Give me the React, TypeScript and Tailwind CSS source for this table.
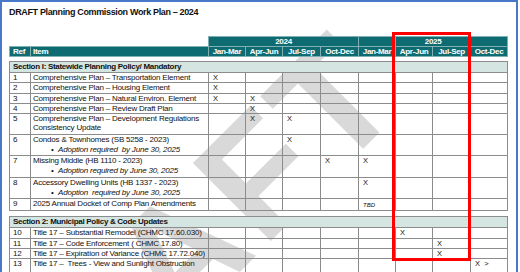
const quarters = ["Jan-Mar", "Apr-Jun", "Jul-Sep", "Oct-Dec", "Jan-Mar", "Apr-Jun", "Jul-Sep", "Oct-Dec"];

type Row = {
  ref: string;
  item: string;
  line2?: string;
  sub?: string;
  marks: Record<number, string>;
};

const section1: Row[] = [
  { ref: "1", item: "Comprehensive Plan – Transportation Element", marks: { 0: "X" } },
  { ref: "2", item: "Comprehensive Plan – Housing Element", marks: { 0: "X" } },
  { ref: "3", item: "Comprehensive Plan – Natural Environ. Element", marks: { 0: "X", 1: "X" } },
  { ref: "4", item: "Comprehensive Plan – Review Draft Plan", marks: { 1: "X" } },
  {
    ref: "5",
    item: "Comprehensive Plan – Development Regulations",
    line2: "Consistency Update",
    marks: { 1: "X", 2: "X" },
  },
  { ref: "6", item: "Condos & Townhomes (SB 5258 - 2023)", sub: "Adoption required  by June 30, 2025", marks: { 2: "X" } },
  { ref: "7", item: "Missing Middle (HB 1110 - 2023)", sub: "Adoption required by June 30, 2025", marks: { 3: "X", 4: "X" } },
  { ref: "8", item: "Accessory Dwelling Units (HB 1337 - 2023)", sub: "Adoption  required by June 30, 2025", marks: { 4: "X" } },
  { ref: "9", item: "2025 Annual Docket of Comp Plan Amendments", marks: { 4: "TBD" } },
];

const section2: Row[] = [
  { ref: "10", item: "Title 17 – Substantial Remodel (CHMC 17.60.030)", marks: { 5: "X" } },
  { ref: "11", item: "Title 17 – Code Enforcement ( CHMC 17.80)", marks: { 6: "X" } },
  { ref: "12", item: "Title 17 – Expiration of Variance (CHMC 17.72.040)", marks: { 6: "X" } },
  { ref: "13", item: "Title 17 –  Trees - View and Sunlight Obstruction", line2: "\u00a0", marks: { 7: "X  >" } },
];

function Mark({ value }: { value?: string }) {
  if (!value) return null;
  if (value === "TBD") {
    return <span className="block pt-[2px] pl-[4px] text-[6px] italic tracking-normal">TBD</span>;
  }
  return <span className="block pl-[4px] text-[7.5px] tracking-normal">{value}</span>;
}

function ItemRow({ row }: { row: Row }) {
  return (
    <tr>
      <td className="border border-[#8c8c8c] pl-[3px] align-top">{row.ref}</td>
      <td className="border border-[#8c8c8c] pl-[2px] align-top">
        <div>{row.item}</div>
        {row.line2 && <div className="leading-[10.2px]">{row.line2}</div>}
        {row.sub && (
          <div className="flex leading-[11.2px] italic">
            <span className="ml-[18px] w-[7px] not-italic">•</span>
            <span>{row.sub}</span>
          </div>
        )}
      </td>
      {quarters.map((q, i) => (
        <td key={q + i} className="border border-[#8c8c8c] align-top">
          <Mark value={row.marks[i]} />
        </td>
      ))}
    </tr>
  );
}

function SectionRow({ title }: { title: string }) {
  return (
    <tr>
      <td
        colSpan={10}
        className="h-[11px] border border-[#8c8c8c] bg-[#d4e5e2] pl-[3px] text-[8px] font-bold leading-[10px] tracking-[-0.3px]"
      >
        {title}
      </td>
    </tr>
  );
}

function Spacer({ h }: { h: string }) {
  return (
    <tr>
      <td colSpan={10} className={h + " p-0"}></td>
    </tr>
  );
}

export default function App() {
  return (
    <div className="relative h-[272px] w-[520px] overflow-hidden bg-white font-['Liberation_Sans',Arial,sans-serif] text-[#111]">
      {/* watermark sits behind everything */}
      <div className="pointer-events-none absolute left-[-90px] top-[411px] origin-top-left -rotate-[45deg] whitespace-nowrap text-[160px] font-bold leading-none tracking-[6px] text-[#d9d9d9]">
        DRAFT
      </div>

      <div className="relative h-[272px] w-[518px] border-l-2 border-r-2 border-t-2 border-[#4a78c8]">
        <div className="pl-[7px] pt-[4px] text-[9px] font-bold leading-[12px] tracking-[-0.35px]">
          DRAFT Planning Commission Work Plan – 2024
        </div>

        <table className="ml-[7px] mt-[18px] w-[498px] table-fixed border-collapse whitespace-pre text-[8px] leading-[9.3px] tracking-[-0.2px]">
          <colgroup>
            <col className="w-[21px]" />
            <col className="w-[178px]" />
            <col className="w-[37px]" />
            <col className="w-[37px]" />
            <col className="w-[38px]" />
            <col className="w-[38px]" />
            <col className="w-[37px]" />
            <col className="w-[37px]" />
            <col className="w-[38px]" />
            <col className="w-[37px]" />
          </colgroup>
          <thead className="text-[8px] font-bold leading-[9px] tracking-[-0.3px] text-white">
            <tr className="h-[10px]">
              <td colSpan={2} className="p-0"></td>
              <td colSpan={4} className="border border-[#7fb0b3] bg-[#0e6b72] text-center">2024</td>
              <td className="border border-[#7fb0b3] bg-[#0e6b72]"></td>
              <td colSpan={2} className="border border-[#7fb0b3] bg-[#0e6b72] text-center">2025</td>
              <td className="border border-[#7fb0b3] bg-[#0e6b72]"></td>
            </tr>
            <tr className="h-[10px]">
              <td className="border border-[#7fb0b3] bg-[#0e6b72] pl-[3px]">Ref</td>
              <td className="border border-[#7fb0b3] bg-[#0e6b72] pl-[2px]">Item</td>
              {quarters.map((q, i) => (
                <td key={q + i} className="border border-[#7fb0b3] bg-[#0e6b72] text-center">
                  {q}
                </td>
              ))}
            </tr>
          </thead>
          <tbody>
            <Spacer h="h-[5px]" />
            <SectionRow title="Section I: Statewide Planning Policy/ Mandatory" />
            {section1.map((r) => (
              <ItemRow key={r.ref} row={r} />
            ))}
            <Spacer h="h-[6px]" />
            <SectionRow title="Section 2: Municipal Policy & Code Updates" />
            {section2.map((r) => (
              <ItemRow key={r.ref} row={r} />
            ))}
          </tbody>
        </table>
      </div>

      {/* highlight around Apr–Sep 2025 */}
      <div className="pointer-events-none absolute left-[392px] top-[32px] h-[229px] w-[79px] border-[3px] border-[#ff0000]"></div>
    </div>
  );
}
